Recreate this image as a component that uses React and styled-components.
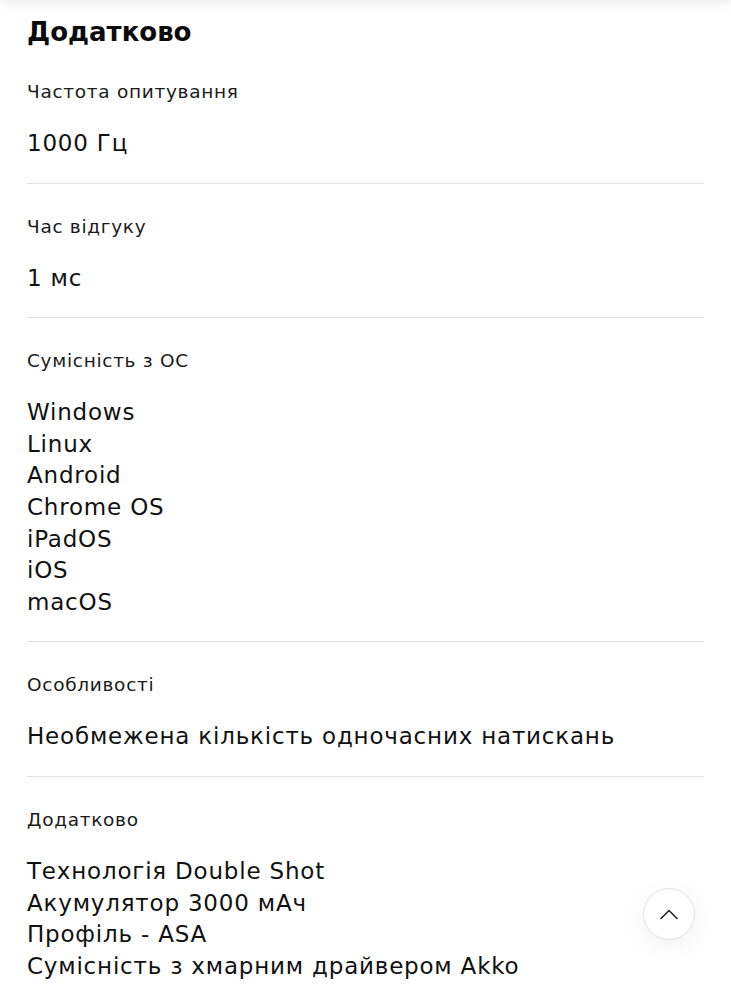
import React from "react";
import styled, { createGlobalStyle } from "styled-components";

const GlobalStyle = createGlobalStyle`
  html, body {
    margin: 0;
    padding: 0;
    background: #fff;
  }
  body {
    font-family: "DejaVu Sans", "Noto Sans", sans-serif;
    color: #111;
  }
`;

const Page = styled.div`
  position: relative;
  width: 731px;
  min-height: 999px;
  overflow: hidden;
  background: #fff;
`;

const TopShade = styled.div`
  position: absolute;
  top: -40px;
  left: 0;
  right: 0;
  height: 40px;
  box-shadow: 0 0 14px rgba(0, 0, 0, 0.12);
`;

const Content = styled.div`
  padding: 15px 27px 0;
`;

const Title = styled.h2`
  margin: 0;
  font-size: 26px;
  line-height: 34px;
  font-weight: 700;
  color: #0b0b0b;
`;

const Item = styled.div`
  padding: 31px 0 23px;
  border-bottom: ${(p) => (p.last ? "none" : "1px solid #e2e2e2")};
`;

const Label = styled.div`
  font-size: 18.5px;
  line-height: 24px;
  letter-spacing: 0.7px;
  color: #1a1a1a;
  margin-bottom: 24px;
`;

const Values = styled.div`
  display: flex;
  flex-direction: column;
`;

const Value = styled.div`
  font-size: 23px;
  line-height: 31.6px;
  letter-spacing: 0.8px;
  color: #111;
`;

const UpButton = styled.button`
  position: absolute;
  left: 643px;
  top: 888px;
  width: 52px;
  height: 52px;
  border-radius: 50%;
  border: 1.5px solid #e2e2e2;
  background: #fff;
  box-shadow: 0 6px 24px rgba(0, 0, 0, 0.06);
  display: flex;
  align-items: center;
  justify-content: center;
  padding: 0;
  cursor: pointer;
`;

const specs = [
  { label: "Частота опитування", values: ["1000 Гц"] },
  { label: "Час відгуку", values: ["1 мс"] },
  {
    label: "Сумісність з ОС",
    values: ["Windows", "Linux", "Android", "Chrome OS", "iPadOS", "iOS", "macOS"],
  },
  { label: "Особливості", values: ["Необмежена кількість одночасних натискань"] },
  {
    label: "Додатково",
    values: [
      "Технологія Double Shot",
      "Акумулятор 3000 мАч",
      "Профіль - ASA",
      "Сумісність з хмарним драйвером Akko",
    ],
  },
];

export default function App() {
  return (
    <Page>
      <GlobalStyle />
      <TopShade />
      <Content>
        <Title>Додатково</Title>
        {specs.map((s, i) => (
          <Item key={s.label} last={i === specs.length - 1}>
            <Label>{s.label}</Label>
            <Values>
              {s.values.map((v) => (
                <Value key={v}>{v}</Value>
              ))}
            </Values>
          </Item>
        ))}
      </Content>
      <UpButton aria-label="Вгору">
        <svg width="20" height="12" viewBox="0 0 20 12" fill="none">
          <path d="M2 10.5 L10 2.5 L18 10.5" stroke="#222" strokeWidth="1.6" strokeLinecap="round" strokeLinejoin="round" />
        </svg>
      </UpButton>
    </Page>
  );
}
